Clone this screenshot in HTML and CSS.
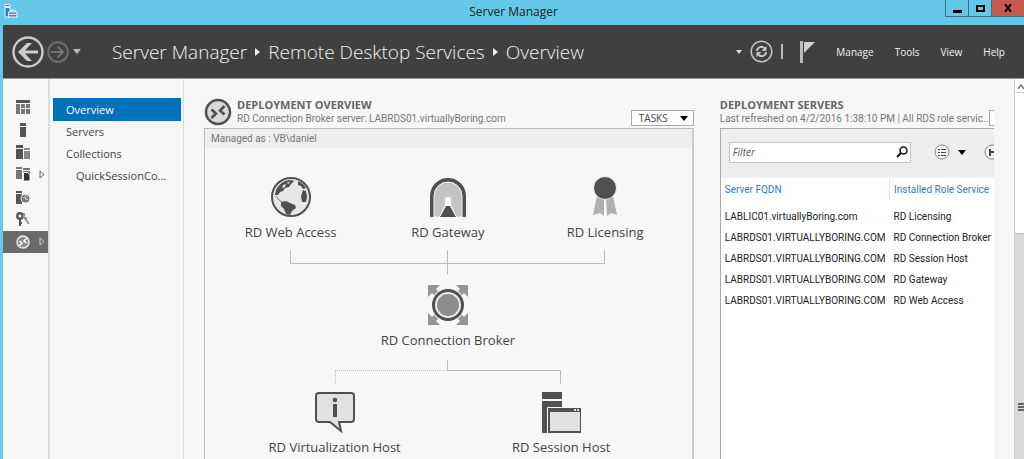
FILE: index.html
```html
<!doctype html>
<html lang="en">

<head>
  <meta charset="utf-8">
  <meta name="viewport" content="width=device-width, initial-scale=1">
  <title>Server Manager</title>
  <link rel="stylesheet" href="styles.css">
</head>

<body>
  <div class="window">
    <div class="titlebar">
      <svg class="app-icon" width="14" height="14" viewBox="0 0 14 14" aria-hidden="true">
        <path fill="#1e86d0" stroke="#e4f4fb" d="M1 .5h5v2H1zM1 3.5h5V13H1z"/>
        <path fill="#5e7f9e" stroke="#f0f6fa" d="M4.500 8h8.500v5h-8.500z"/>
        <path fill="none" stroke="#e4eef5" d="M7 8V6h4v2M5 10.500h8"/>
      </svg>
      <span class="window-title">Server Manager</span>
      <div class="window-buttons">
        <button type="button" aria-label="Minimize"><svg width="9" height="9"><path d="M0 6h9v3H0z"/></svg></button>
        <button type="button" aria-label="Maximize"><svg width="9" height="9"><path fill="none" stroke="#000" stroke-width="2" d="M1 2h7v5H1z"/></svg></button>
        <button type="button" class="close" aria-label="Close"><svg width="8" height="8"><path fill="none" stroke="#000" stroke-width="2" d="M1 0l6 8M7 0L1 8"/></svg></button>
      </div>
    </div>

    <header class="header">
      <div class="history">
        <button type="button" aria-label="Back"><svg width="32" height="34" viewBox="0 0 32 34">
          <circle cx="16" cy="17" r="14.500" fill="none" stroke="#ccc" stroke-width="2.400"/>
          <path fill="#ccc" d="M6 17l9-9h5l-7 7.500h13v3H13l7 7.500h-5z"/>
        </svg></button>
        <button type="button" aria-label="Forward"><svg width="22" height="22" viewBox="0 0 22 22">
          <circle cx="11" cy="11" r="9.800" fill="none" stroke="#6e6e6e" stroke-width="2"/>
          <path fill="none" stroke="#747474" stroke-width="2" d="M4 11h12M10.500 5.500L16 11l-5.500 5.500"/>
        </svg></button>
        <button type="button" aria-label="Recent pages"><svg width="10" height="6"><path fill="#bbb" d="M1 0h8L5 5z"/></svg></button>
      </div>
      <nav class="breadcrumb" aria-label="Breadcrumb">
        <a href="#">Server Manager</a>
        <svg width="5" height="8"><path fill="#eee" d="M0 0l5 4-5 4z"/></svg>
        <a href="#">Remote Desktop Services</a>
        <svg width="5" height="8"><path fill="#eee" d="M0 0l5 4-5 4z"/></svg>
        <a href="#">Overview</a>
      </nav>
      <div class="tools">
        <button type="button" aria-label="Refresh options"><svg width="6" height="4"><path fill="#ddd" d="M0 0h6L3 4z"/></svg></button>
        <button type="button" aria-label="Refresh"><svg width="23" height="23" viewBox="0 0 23 23">
          <circle cx="11.500" cy="11.500" r="10.300" fill="none" stroke="#c4c4c4" stroke-width="1.500"/>
          <path fill="none" stroke="#c4c4c4" stroke-width="2" d="M7 11c0-4 5-5.500 8-2.500M16 12c0 4-5 5.500-8 2.500"/>
          <path fill="#c4c4c4" d="M16.500 6v5h-5zM6.500 17v-5h5z"/>
        </svg></button>
        <span class="divider"></span>
        <button type="button" class="flag" aria-label="Notifications"><svg width="15" height="22"><path fill="#bbb" d="M0 0h3v22H0z"/><path fill="#d0d0d0" d="M4 1h11L4 12z"/></svg></button>
      </div>
      <ul class="menu">
        <li><a href="#">Manage</a></li>
        <li><a href="#">Tools</a></li>
        <li><a href="#">View</a></li>
        <li><a href="#">Help</a></li>
      </ul>
    </header>

    <div class="body">
      <ul class="rail">
        <li><a href="#" aria-label="Dashboard"><svg width="14" height="14"><path fill="#555" d="M0 0h14v3H0z"/><path fill="#777" d="M0 4h4v10H0zM5 4h4v4H5zM10 4h4v4h-4zM5 9h4v5H5zM10 9h4v5h-4z"/></svg></a></li>
        <li><a href="#" aria-label="Local Server"><svg width="14" height="14"><path fill="#555" d="M4 0h6v3H4zM4 4h6v10H4z"/></svg></a></li>
        <li><a href="#" aria-label="All Servers"><svg width="14" height="14"><path fill="#555" d="M0 0h7v3H0zM0 4h7v10H0z"/><path fill="#888" d="M8 3h6v2H8zM8 6h6v8H8z"/></svg></a></li>
        <li><a href="#" aria-label="File and Storage Services"><svg width="14" height="14"><path fill="#777" d="M0 0h6v2H0zM0 3h6v9H0zM7 1h7v2H7zM7 4h7v8H7z"/><path fill="#333" stroke="#f7f7f7" d="M7.500 5.500h4L14 8v6H7.500z"/></svg>
          <svg class="expand" width="6" height="9"><path d="M1 1l4 3.500L1 8z"/></svg></a></li>
        <li><a href="#" aria-label="IIS"><svg width="14" height="14"><path fill="#555" d="M0 1h6v2H0zM0 4h6v10H0z"/><circle cx="9.500" cy="8.500" r="4.500" fill="#777" stroke="#f7f7f7"/><path fill="none" stroke="#ddd" d="M7 8l2-1 1 3 2-1M9 5l3 2"/></svg></a></li>
        <li><a href="#" aria-label="Remote Access"><svg width="14" height="14"><circle cx="4" cy="4" r="2.700" fill="none" stroke="#555" stroke-width="2.400"/><path fill="none" stroke="#555" stroke-width="2" d="M4 6v8M4 11h2"/><path fill="none" stroke="#999" stroke-width="2" d="M8 1v4l5 7M9 6h2"/></svg></a></li>
        <li class="active"><a href="#" aria-label="Remote Desktop Services"><svg width="14" height="14"><circle cx="7" cy="7" r="6" fill="#8c8c8c" stroke="#eee" stroke-width="1.500"/><path fill="none" stroke="#fff" stroke-width="1.500" d="M3.500 6l2.500 2-2.500 2.500M10.500 3.500L8 6l2.500 2"/></svg>
          <svg class="expand" width="6" height="9"><path d="M1 1l4 3.500L1 8z"/></svg></a></li>
      </ul>

      <ul class="sidenav">
        <li class="active"><a href="#">Overview</a></li>
        <li><a href="#">Servers</a></li>
        <li><a href="#">Collections</a></li>
        <li class="child"><a href="#">QuickSessionCo...</a></li>
      </ul>

      <main class="main">
        <section class="overview">
          <div class="tile-head">
            <svg width="28" height="28" viewBox="0 0 28 28" aria-hidden="true">
              <circle cx="14" cy="14" r="12" fill="#d9d9d9" stroke="#505050" stroke-width="2.500"/>
              <path fill="none" stroke="#505050" stroke-width="2.600" d="M7.500 11.500l4.500 4-4.500 4.500M20.500 8L16 12.500l4.500 4"/>
            </svg>
            <div class="tile-text">
              <h2>DEPLOYMENT OVERVIEW</h2>
              <p>RD Connection Broker server: LABRDS01.virtuallyBoring.com</p>
            </div>
            <button type="button" class="tasks">TASKS <svg width="8" height="5"><path d="M0 0h8L4 5z"/></svg></button>
          </div>
          <div class="panel">
            <p class="managed">Managed as : VB\daniel</p>
            <div class="diagram">
              <div class="row three">
                <a href="#" class="node"><svg width="42" height="42" viewBox="0 0 42 42">
                  <circle cx="21" cy="21" r="19" fill="#e6e6e6" stroke="#505050" stroke-width="2"/>
                  <path fill="#505050" d="M6 14c3-6 8-10 15-10l3 1-3 3-2 3-4 1-2 3-3 1-2 3-3 0zM11 26l5-1 4 2 5 2 1 3-4 3-2 4-4-1-2-5-3-3zM28 5l5 3 3 4-3 1-2-3-3-1zM33 14l3 1 1 6-1 5-4 0-1-6z"/>
                  <path fill="#e6e6e6" d="M13 9l3-1-1 3-3 1zM17 6h3l-2 2z"/>
                  <path fill="none" stroke="#777" d="M6 20l3 4 3 2"/>
                </svg>RD Web Access</a>
                <a href="#" class="node"><svg width="42" height="42" viewBox="0 0 42 42">
                  <path fill="#505050" d="M3 41V20a18 18 0 0 1 36 0v21z"/>
                  <path fill="#c3c3c3" stroke="#f5f5f5" d="M7 41V20a14 14 0 0 1 28 0v21z"/>
                  <path fill="#fff" d="M12 41l6-12v-5a3 3 0 0 1 6 0v5l6 12z"/>
                  <path fill="#505050" d="M13 41l6-11h4l6 11z"/>
                </svg>RD Gateway</a>
                <a href="#" class="node"><svg width="42" height="42" viewBox="0 0 42 42">
                  <path fill="#b0b0b0" d="M13 20h7v20l-4-3-7 2zM22 20h7l4 19-6-2-4 3z"/>
                  <circle cx="21" cy="12" r="11.500" fill="#505050" stroke="#f7f7f7"/>
                </svg>RD Licensing</a>
              </div>
              <div class="join"><span></span><span></span></div>
              <div class="stem"></div>
              <div class="row one">
                <a href="#" class="node"><svg width="42" height="42" viewBox="0 0 42 42">
                  <path fill="#959595" d="M1 1h12L9 5l6 6-4 4-6-6-4 4zM41 1v12l-4-4-6 6-4-4 6-6-4-4zM1 41V29l4 4 6-6 4 4-6 6 4 4zM41 41H29l4-4-6-6 4-4 6 6 4-4z"/>
                  <circle cx="21" cy="21" r="17" fill="#f7f7f7"/>
                  <circle cx="21" cy="21" r="14.500" fill="#ececec" stroke="#505050" stroke-width="3"/>
                  <circle cx="21" cy="21" r="11" fill="#8c8c8c"/>
                </svg>RD Connection Broker</a>
              </div>
              <div class="stem short"></div>
              <div class="split"><span class="optional"></span><span></span></div>
              <div class="row two">
                <a href="#" class="node"><svg width="42" height="42" viewBox="0 0 42 42">
                  <path fill="#e2e2e2" stroke="#505050" stroke-width="2" d="M5 2h32q3 0 3 3v23q0 3-3 3H25l2 9-11-9H5q-3 0-3-3V5q0-3 3-3z"/>
                  <circle cx="21" cy="9" r="2.300" fill="#505050"/><path fill="#505050" d="M19 13h4v13h-4z"/>
                </svg>RD Virtualization Host</a>
                <a href="#" class="node"><svg width="42" height="42" viewBox="0 0 42 42">
                  <path fill="#505050" d="M2 1h20v7H2zM2 10h20v7H2zM2 17h5v25H2zM8 17h33v25H8z"/>
                  <path fill="none" stroke="#f7f7f7" d="M7.500 42V16.500H41"/>
                  <path fill="#e2e2e2" d="M10 21h30v19H10z"/><path fill="#ddd" d="M34 18h2v2h-2zM37 18h2v2h-2z"/>
                </svg>RD Session Host</a>
              </div>
            </div>
          </div>
        </section>

        <section class="servers">
          <div class="tile-head">
            <div class="tile-text">
              <h2>DEPLOYMENT SERVERS</h2>
              <p>Last refreshed on 4/2/2016 1:38:10 PM | All RDS role servic...</p>
            </div>
            <button type="button" class="tasks" aria-label="Tasks"></button>
          </div>
          <div class="list">
            <div class="filter">
              <label class="search">
                <input type="text" placeholder="Filter" aria-label="Filter">
                <svg width="12" height="12" viewBox="0 0 12 12"><circle cx="7.500" cy="4.500" r="3.500" fill="none" stroke="#111" stroke-width="1.500"/><path stroke="#111" stroke-width="2" d="M5 7l-4 4"/></svg>
              </label>
              <button type="button" class="criteria" aria-label="Criteria"><svg width="16" height="16"><circle cx="8" cy="8" r="7" fill="#f7f7f7" stroke="#888"/><path stroke="#444" d="M4 5.500h2M7 5.500h5M4 8.500h2M7 8.500h5M4 11.500h2M7 11.500h5"/></svg>
                <svg width="8" height="5"><path d="M0 0h8L4 5z"/></svg></button>
              <button type="button" class="save" aria-label="Save query"><svg width="16" height="16"><circle cx="8" cy="8" r="7" fill="#f7f7f7" stroke="#888"/><path fill="#444" d="M5 5h7v7H5z"/><path fill="#eee" d="M7 5h3v2H7zM7 9h3v3H7z"/></svg></button>
            </div>
            <table>
              <thead>
                <tr><th>Server FQDN</th><th>Installed Role Service</th></tr>
              </thead>
              <tbody>
                <tr><td>LABLIC01.virtuallyBoring.com</td><td>RD Licensing</td></tr>
                <tr><td>LABRDS01.VIRTUALLYBORING.COM</td><td>RD Connection Broker</td></tr>
                <tr><td>LABRDS01.VIRTUALLYBORING.COM</td><td>RD Session Host</td></tr>
                <tr><td>LABRDS01.VIRTUALLYBORING.COM</td><td>RD Gateway</td></tr>
                <tr><td>LABRDS01.VIRTUALLYBORING.COM</td><td>RD Web Access</td></tr>
              </tbody>
            </table>
          </div>
        </section>
      </main>

      <div class="scrollbar" aria-hidden="true">
        <div class="up"><svg width="8" height="5"><path fill="none" stroke="#777" stroke-width="1.500" d="M1 5l3-4 3 4"/></svg></div>
        <div class="track"></div>
        <div class="thumb"><svg width="6" height="8"><path stroke="#666" stroke-width="2" d="M0 1h6M0 4h6M0 7h6"/></svg></div>
      </div>
    </div>
  </div>
</body>

</html>
```
FILE: styles.css
```css
* { box-sizing:border-box; }
body { margin:0; font-family:"Open Sans","Noto Sans",sans-serif; font-size:10px; color:#444; }
h2, p, ul { margin:0; padding:0; }
ul { list-style:none; }
a { color:inherit; text-decoration:none; }
button { margin:0; border:0; padding:0; background:none; font:inherit; color:inherit; }
svg { display:block; flex:none; }

.window { display:flex; flex-direction:column; min-height:100vh; padding-left:3px; background-color:#65c8e8; overflow:hidden; }

/* Title bar */
.titlebar { display:grid; grid-template-columns:1fr auto 1fr; height:25px; }
.app-icon { margin:4px 0 0 1px; }
.window-title { font-size:12px; line-height:24px; color:#222; }
.window-buttons { display:flex; justify-content:flex-end; height:17px; }
.window-buttons button { display:flex; align-items:center; justify-content:center; width:23px; border:solid #35758a; border-width:0 0 1px 1px; }
.window-buttons .close { width:33px; background-color:#c45a52; }

/* Dark header */
.header { display:flex; align-items:center; height:54px; padding:0 19px 0 9px; background-color:#404040; border-bottom:solid 1px #999; color:#f2f2f2; }
.history { display:flex; align-items:center; gap:3px; width:100px; }
.breadcrumb { display:flex; align-items:center; gap:8px; font-size:19px; font-weight:300; white-space:nowrap; }
.tools { display:flex; align-items:center; gap:8px; margin-left:auto; }
.divider { width:2px; height:15px; background-color:#bbb; }
.flag { margin-left:9px; }
.menu { display:flex; gap:21px; margin-left:21px; }

.body { display:flex; flex:1; background-color:#f7f7f7; }

/* Server group icons */
.rail { display:grid; grid-auto-rows:1fr; align-self:flex-start; width:45px; height:174px; padding-top:17px; }
.rail a { display:flex; align-items:center; gap:9px; height:100%; padding-left:13px; }
.expand path { fill:none; stroke:#666; }
.rail .active { background-color:#6a6a6a; }
.active .expand path { stroke:#ccc; }

.sidenav { flex:none; width:136px; padding:19px 2px 0 3px; border:solid #dcdcdc; border-width:0 1px 0 2px; font-size:11px; line-height:22px; }
.sidenav a { display:block; padding-left:13px; }
.sidenav .active { background-color:#0072bc; color:#fff; line-height:23px; }
.sidenav .child a { padding-left:23px; }

/* Tiles */
.main { display:flex; flex:1; gap:26px; min-width:0; padding:17px 20px 0; }
.overview { display:flex; flex-direction:column; flex:0 0 62%; min-width:0; }
.servers { display:flex; flex-direction:column; flex:1; min-width:0; overflow:hidden; }
.tile-head { display:flex; align-items:flex-end; height:32px; padding-bottom:2px; }
.tile-text { flex:1; min-width:0; padding-left:5px; color:#777; line-height:14px; white-space:nowrap; }
.tile-text h2 { font-size:11px; line-height:14px; color:#666; }
.tile-text p, .managed, table { font-family:Roboto,"Open Sans",sans-serif; font-size:10px; }
.tasks { display:flex; align-items:center; justify-content:space-between; width:63px; height:16px; border:solid 1px #aaa; padding:0 5px 0 7px; background-color:#fff; }
.panel { flex:1; border:solid #bbb; border-width:1px 2px 0 1px; border-right-color:#ccc; }
.managed { padding-left:6px; background-color:#eee; color:#777; line-height:19px; }

/* Deployment diagram */
.diagram { padding:28px 8px 0 7px; font-size:13px; }
.row { display:grid; }
.node { display:flex; flex-direction:column; align-items:center; gap:4px; line-height:20px; white-space:nowrap; }
.three { grid-template-columns:repeat(3,1fr); }
.two { grid-template-columns:repeat(2,1fr); margin:0 2%; padding-top:7px; }
.join { display:grid; grid-template-columns:1fr 1fr; height:14px; margin:8px 16.6% 0; border:solid #bbb; border-width:0 1px 1px; }
.join span:first-child { border-right:solid 1px #bbb; }
.stem { width:1px; height:10px; margin:0 auto 10px; background-color:#bbb; }
.short { margin:10px auto 0; }
.split { display:grid; grid-template-columns:1fr 1fr; height:14px; margin:0 26%; }
.split span { border:solid #bbb; border-width:1px 1px 0 0; }
.split .optional { border-style:dotted; border-width:1px 0 0 1px; }

/* Server list */
.servers .tile-text { padding-left:0; }
.servers .tasks { width:5px; padding:0; border-right:0; }
.list { flex:1; border:solid #aaa; border-width:1px 0 0 1px; background-color:#fff; overflow:hidden; }
.filter { display:flex; align-items:center; height:49px; padding-left:8px; background-color:#eee; }
.search { display:flex; align-items:center; flex:none; width:182px; height:21px; margin-bottom:3px; border:solid 1px #c4c4c4; padding-right:2px; background-color:#fff; }
.search input { flex:1; min-width:0; border:0; outline:0; padding:0 3px; background:none; font:italic 10px "Open Sans",sans-serif; }
.search input::placeholder { color:#555; }
.criteria { display:flex; align-items:center; gap:8px; margin:0 18px 3px 23px; }
.save { margin-bottom:3px; }
table { border-collapse:collapse; white-space:nowrap; }
th, td { padding:0 4px; text-align:left; font-weight:400; }
th { height:22px; border-right:solid 1px #e4e4e4; color:#2482c8; }
td { height:21px; color:#222; }
tbody:before { content:""; display:block; height:6px; }

/* Scrollbar */
.scrollbar { display:flex; flex-direction:column; flex:none; width:10px; border-left:solid 1px #ccc; background-color:#fff; overflow:hidden; }
.up { height:14px; padding:5px 0 0 2px; border-bottom:solid 1px #ccc; }
.track { flex:0 0 140px; }
.thumb { flex:1; display:flex; align-items:center; justify-content:flex-end; padding-top:120px; border-top:solid 1px #bbb; background-color:#dadada; }
```
